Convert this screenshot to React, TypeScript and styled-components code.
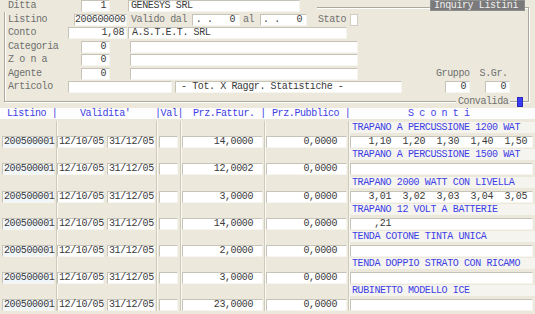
import React from 'react';
import styled, { createGlobalStyle } from 'styled-components';

const GlobalStyle = createGlobalStyle`
  html, body {
    margin: 0;
    padding: 0;
    background: #ECE9DC;
  }
  body {
    font-family: "Liberation Mono", "DejaVu Sans Mono", monospace;
    font-size: 10px;
    letter-spacing: -0.4px;
  }
  * {
    box-sizing: border-box;
  }
`;

const Screen = styled.div`
  width: 535px;
  height: 314px;
  overflow: hidden;
  background: #ECE9DC;
  color: #404040;
`;

// group box round the header form
const Frame = styled.div`
  margin: 7px 6px 0 4px;
  height: 95px;
  border: 1px solid #ABA89C;
  box-shadow: inset 1px 1px 0 #FFFFFF, 1px 1px 0 #FFFFFF;
`;

const FormBody = styled.div`
  margin: -8px 0 0 -5px;
`;

const Row = styled.div<{ $mt?: number }>`
  display: flex;
  align-items: center;
  height: 12px;
  margin-top: ${p => p.$mt ?? 1.5}px;
`;

const Cover = styled.div<{ $w: number }>`
  display: flex;
  align-items: center;
  width: ${p => p.$w}px;
  height: 12px;
  background: #ECE9DC;
`;

const Label = styled.span<{ $w?: number; $ml?: number; $pl?: number; $bg?: boolean }>`
  flex: none;
  width: ${p => (p.$w ? `${p.$w}px` : 'auto')};
  margin-left: ${p => p.$ml ?? 0}px;
  padding-left: ${p => p.$pl ?? 0}px;
  padding-right: ${p => (p.$bg ? 2 : 0)}px;
  background: ${p => (p.$bg ? '#ECE9DC' : 'transparent')};
  color: #6F6F6F;
  line-height: 12px;
  white-space: pre;
`;

const Box = styled.div<{ $w: number; $ml?: number; $right?: boolean; $pl?: number; $pr?: number }>`
  flex: none;
  width: ${p => p.$w}px;
  height: 12px;
  margin-left: ${p => p.$ml ?? 0}px;
  padding: 0 ${p => p.$pr ?? 3}px 0 ${p => p.$pl ?? 2}px;
  background: #FFFFFF;
  border-top: 1px solid #C6C3B8;
  border-left: 1px solid #C6C3B8;
  border-bottom: 1px solid #F6F5F0;
  border-right: 1px solid #F6F5F0;
  text-align: ${p => (p.$right ? 'right' : 'left')};
  line-height: 10px;
  white-space: pre;
  overflow: hidden;
  color: #3A3A3A;
`;

const Title = styled.div`
  flex: none;
  margin-left: 113px;
  width: 95px;
  height: 11px;
  margin-top: -1px;
  padding-left: 3px;
  background: #7A7A7A;
  border: 1px solid #8E8E8E;
  color: #F0F0F0;
  line-height: 9px;
  white-space: pre;
`;

const Flag = styled.div<{ $ml?: number; $on?: boolean }>`
  flex: none;
  width: ${p => (p.$on ? 6 : 8)}px;
  height: ${p => (p.$on ? 10 : 12)}px;
  margin-left: ${p => p.$ml ?? 0}px;
  background: ${p => (p.$on ? '#3B3BF2' : '#FFFFFF')};
  border: 1px solid ${p => (p.$on ? '#2A2AB8' : '#D0CDC2')};
`;

const HeadBand = styled.div`
  display: flex;
  margin-top: 6px;
  height: 11px;
  padding-left: 7px;
  background: #FDFDFD;
  color: #3D3DE6;
  line-height: 11px;
  white-space: pre;
`;

const HeadCell = styled.span<{ $w?: number }>`
  flex: none;
  width: ${p => (p.$w ? `${p.$w}px` : 'auto')};
`;

const Table = styled.div`
  margin-top: 2px;
`;

const Record = styled.div`
  display: grid;
  grid-template-columns: 56px 100px 24px 84px 84px 1fr;
  height: 27.2px;
`;

const Cell = styled.div<{ $pl?: number; $first?: boolean }>`
  display: flex;
  flex-direction: column;
  justify-content: flex-end;
  padding-left: ${p => p.$pl ?? 1}px;
  border-left: ${p => (p.$first ? 'none' : '1px solid #CFCBBC')};
  box-shadow: ${p => (p.$first ? 'none' : 'inset 1px 0 0 #FAF9F4')};
`;

const Pair = styled.div`
  display: flex;
  gap: 3px;
`;

const Field = styled.div<{ $w: number; $right?: boolean; $tint?: boolean; $pr?: number }>`
  width: ${p => p.$w}px;
  height: 12px;
  padding: 0 ${p => p.$pr ?? 0}px 0 1px;
  background: ${p => (p.$tint ? '#F1F6FA' : '#FFFFFF')};
  border-top: 1px solid #C6C3B8;
  border-left: 1px solid #C6C3B8;
  border-bottom: 1px solid #F6F5F0;
  border-right: 1px solid #F6F5F0;
  text-align: ${p => (p.$right ? 'right' : 'left')};
  line-height: 10px;
  white-space: pre;
  color: #3A3A3A;
`;

const Desc = styled.div`
  height: 11px;
  margin-bottom: 3px;
  margin-left: -1px;
  padding-left: 3px;
  background: #F5F4EE;
  color: #3D3DE6;
  line-height: 11px;
  white-space: pre;
`;

const Sconti = styled.div`
  display: flex;
  width: 183px;
  height: 12px;
  padding-left: 6px;
  background: #FFFFFF;
  border-top: 1px solid #C6C3B8;
  border-left: 1px solid #C6C3B8;
  border-bottom: 1px solid #F6F5F0;
  border-right: 1px solid #F6F5F0;
  line-height: 10px;
  color: #3A3A3A;
`;

const Slot = styled.span`
  flex: none;
  width: 34px;
  text-align: right;
`;

interface Item {
  desc: string;
  fattur: string;
  sconti: string[];
}

const items: Item[] = [
  { desc: 'TRAPANO A PERCUSSIONE 1200 WAT', fattur: '14,0000', sconti: ['1,10', '1,20', '1,30', '1,40', '1,50'] },
  { desc: 'TRAPANO A PERCUSSIONE 1500 WAT', fattur: '12,0002', sconti: [] },
  { desc: 'TRAPANO 2000 WATT CON LIVELLA', fattur: '3,0000', sconti: ['3,01', '3,02', '3,03', '3,04', '3,05'] },
  { desc: 'TRAPANO 12 VOLT A BATTERIE', fattur: '14,0000', sconti: [',21'] },
  { desc: 'TENDA COTONE TINTA UNICA', fattur: '2,0000', sconti: [] },
  { desc: 'TENDA DOPPIO STRATO CON RICAMO', fattur: '3,0000', sconti: [] },
  { desc: 'RUBINETTO MODELLO ICE', fattur: '23,0000', sconti: [] },
];

function CodeRow({ label }: { label: string }) {
  return (
    <Row>
      <Label $w={81} $pl={8}>{label}</Label>
      <Box $w={29} $right>0</Box>
      <Box $w={228} $ml={20}></Box>
    </Row>
  );
}

export default function App() {
  return (
    <Screen>
      <GlobalStyle />
      <Frame>
        <FormBody>
          <Row $mt={0}>
            <Cover $w={317}>
              <Label $w={81} $pl={8}>Ditta</Label>
              <Box $w={29} $right>1</Box>
              <Box $w={172} $ml={18}>GENESYS SRL</Box>
            </Cover>
            <Title>Inquiry Listini</Title>
          </Row>
          <Row>
            <Label $w={74} $pl={8}>Listino</Label>
            <Box $w={53} $pl={0} $pr={0}>200600000</Box>
            <Label $w={61} $ml={4}>Valido dal</Label>
            <Box $w={48} $right $pr={4}>{'. .   0'}</Box>
            <Label $w={17} $ml={3}>al</Label>
            <Box $w={47} $right $pr={4}>{'. .   0'}</Box>
            <Label $w={32} $ml={11}>Stato</Label>
            <Flag />
          </Row>
          <Row>
            <Label $w={68} $pl={8}>Conto</Label>
            <Box $w={59} $right $pr={2}>1,08</Box>
            <Box $w={219} $ml={1} $pl={3}>A.S.T.E.T. SRL</Box>
          </Row>
          <CodeRow label="Categoria" />
          <CodeRow label="Z o n a" />
          <Row>
            <Label $w={81} $pl={8}>Agente</Label>
            <Box $w={29} $right>0</Box>
            <Box $w={228} $ml={20}></Box>
            <Label $ml={78}>Gruppo</Label>
            <Label $ml={10}>S.Gr.</Label>
          </Row>
          <Row>
            <Label $w={68} $pl={8}>Articolo</Label>
            <Box $w={104}></Box>
            <Box $w={227} $ml={3} $pl={5}>- Tot. X Raggr. Statistiche -</Box>
            <Box $w={25} $ml={43} $right>0</Box>
            <Box $w={25} $ml={15} $right>0</Box>
          </Row>
          <Row $mt={3}>
            <Label $ml={456} $pl={2} $bg>Convalida</Label>
            <Flag $on $ml={7} />
          </Row>
        </FormBody>
      </Frame>

      <HeadBand>
        <HeadCell $w={73}>Listino |</HeadCell>
        <HeadCell $w={75}>Validita'</HeadCell>
        <HeadCell $w={38}>|Val|</HeadCell>
        <HeadCell $w={79}>Prz.Fattur. |</HeadCell>
        <HeadCell $w={136}>Prz.Pubblico |</HeadCell>
        <HeadCell>S c o n t i</HeadCell>
      </HeadBand>

      <Table>
        {items.map(item => (
          <Record key={item.desc}>
            <Cell $first $pl={2}>
              <Field $w={52} $tint>200500001</Field>
            </Cell>
            <Cell $pl={0}>
              <Pair>
                <Field $w={47}>12/10/05</Field>
                <Field $w={48}>31/12/05</Field>
              </Pair>
            </Cell>
            <Cell $pl={2}>
              <Field $w={19}></Field>
            </Cell>
            <Cell>
              <Field $w={81} $right $pr={9}>{item.fattur}</Field>
            </Cell>
            <Cell>
              <Field $w={81} $right $pr={9}>0,0000</Field>
            </Cell>
            <Cell>
              <Desc>{item.desc}</Desc>
              <Sconti>
                {item.sconti.map((s, i) => (
                  <Slot key={i}>{s}</Slot>
                ))}
              </Sconti>
            </Cell>
          </Record>
        ))}
      </Table>
    </Screen>
  );
}
